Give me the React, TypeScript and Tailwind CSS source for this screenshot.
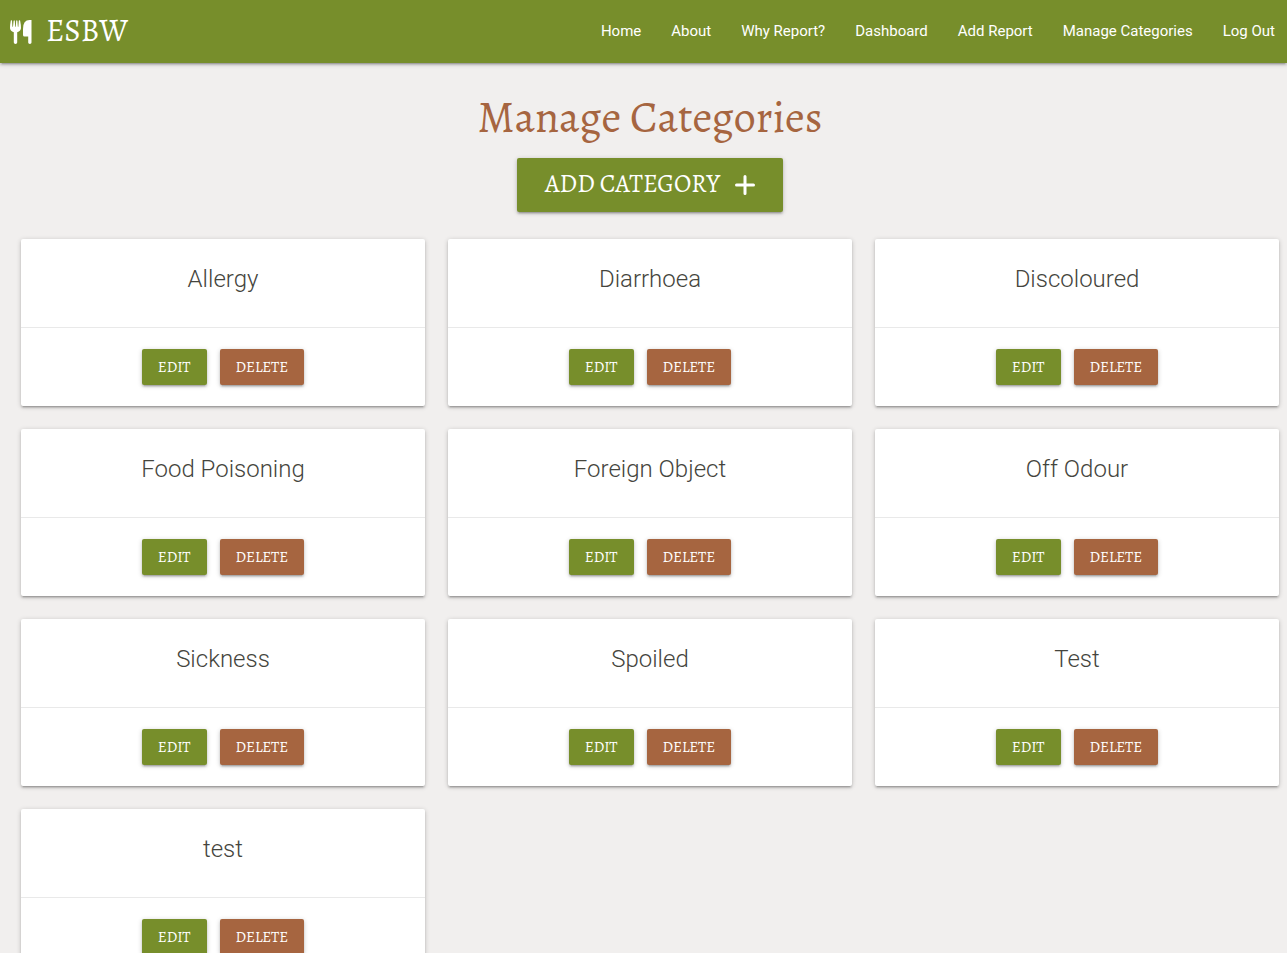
const links = ['Home', 'About', 'Why Report?', 'Dashboard', 'Add Report', 'Manage Categories', 'Log Out'];

const categories = [
  'Allergy', 'Diarrhoea', 'Discoloured', 'Food Poisoning', 'Foreign Object',
  'Off Odour', 'Sickness', 'Spoiled', 'Test', 'test',
];

const raised =
  'shadow-[0_2px_2px_0_rgba(0,0,0,0.14),0_3px_1px_-2px_rgba(0,0,0,0.12),0_1px_5px_0_rgba(0,0,0,0.2)]';
const serif = "font-['Alegreya','Liberation_Serif',serif]";

function CutleryIcon() {
  return (
    <svg viewBox="0 0 22 24" className="h-6 w-[22px]" fill="currentColor" aria-hidden="true">
      <path d="M0.8 0.6Q1.4 0 2 0.6L2.4 6.5Q2.7 7.3 3 6.5L3.6 0.7Q4.2 0 4.8 0.7L5.2 6.5Q5.5 7.3 5.8 6.5L6.2 0.7Q6.8 0 7.4 0.7L7.8 6.5Q8.1 7.3 8.4 6.5L8.8 0.6Q9.5 0 10.1 0.6Q11 5 11 8Q11 10.8 7.2 12.2V22.6Q7.2 24 5.5 24Q3.8 24 3.8 22.6V12.2Q0 10.8 0 8Q0 5 .8 .6Z" />
      <path d="M21.5 0V22.6Q21.5 24 19.9 24Q18.2 24 18.2 22.6V16.5H14.5Q13 16.5 13 15V9Q13 0 19.5 0Z" />
    </svg>
  );
}

function CategoryCard({ name }: { name: string }) {
  return (
    <article className={`rounded-xs bg-white text-center ${raised}`}>
      <h2 className="h-[88px] pt-6 font-['Roboto',sans-serif] text-2xl font-light text-[#45453d]">{name}</h2>
      <div className="flex justify-center gap-[13px] border-t border-[#e9e9e9] py-[21px]">
        <button type="button" className={`h-9 rounded-xs bg-[#778e2b] px-4 text-[15px] text-white ${serif} ${raised}`}>EDIT</button>
        <button type="button" className={`h-9 rounded-xs bg-[#a66540] px-4 text-[15px] text-white ${serif} ${raised}`}>DELETE</button>
      </div>
    </article>
  );
}

export default function App() {
  return (
    <div className="min-h-screen bg-[#f1efee]">
      <header className={`flex h-[63px] items-center justify-between bg-[#778e2b] pr-3 pl-[10px] text-white ${raised}`}>
        <a href="#" className={`flex items-center gap-[14px] text-[31px] ${serif}`}>
          <CutleryIcon />
          ESBW
        </a>
        <nav className="flex gap-[30px] font-['Roboto',sans-serif] text-[15px]">
          {links.map((label) => (
            <a key={label} href="#">{label}</a>
          ))}
        </nav>
      </header>
      <main className="pr-2 pb-6 pl-[21px]">
        <div className="flex flex-col items-center pt-7">
          <h1 className={`text-[44px] leading-[52px] text-[#a66540] ${serif}`}>Manage Categories</h1>
          <button
            type="button"
            className={`mt-[15px] flex h-[54px] items-center gap-[15px] rounded-xs bg-[#778e2b] px-7 text-[25px] text-white ${serif} ${raised}`}
          >
            ADD CATEGORY
            <svg viewBox="0 0 20 20" className="size-5" fill="none" stroke="currentColor" strokeWidth="3" strokeLinecap="round" aria-hidden="true">
              <path d="M10 1.5V18.5M1.5 10H18.5" />
            </svg>
          </button>
        </div>
        <div className="mt-[27px] grid grid-cols-3 gap-[23px]">
          {categories.map((name) => (
            <CategoryCard key={name} name={name} />
          ))}
        </div>
      </main>
    </div>
  );
}
